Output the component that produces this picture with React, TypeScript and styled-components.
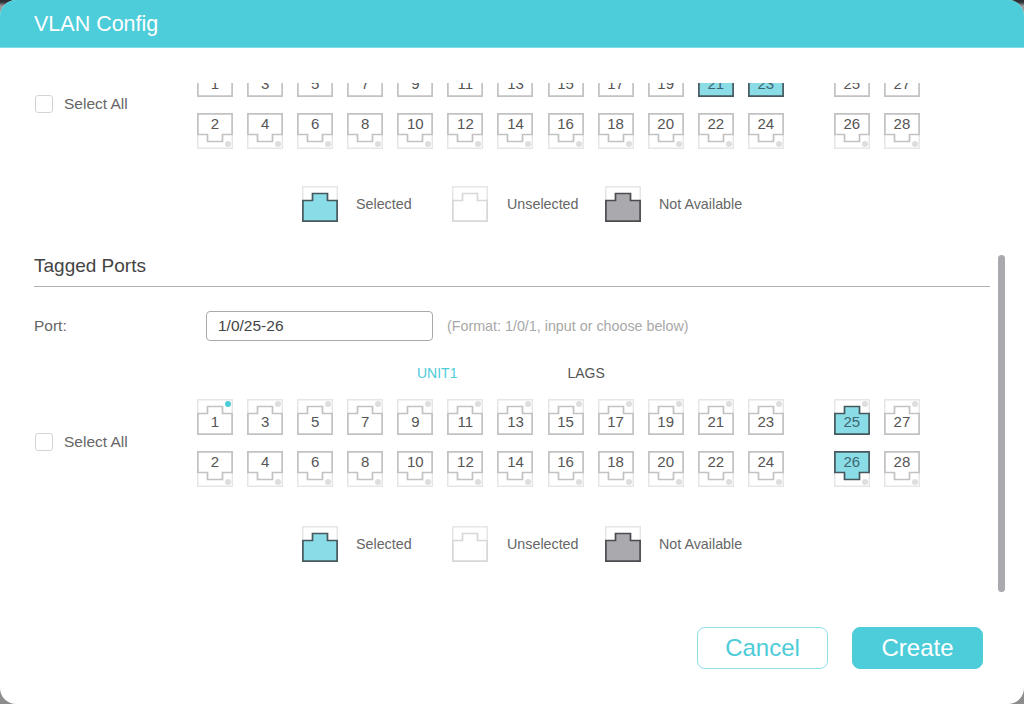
import React from "react";
import styled, { createGlobalStyle } from "styled-components";

const Global = createGlobalStyle`
  html, body { margin: 0; padding: 0; }
  body { background: linear-gradient(#2c3034 0, #2c3034 2px, #9a9a9a 6px, #8c8c8c 100%); }
  * { box-sizing: border-box; }
`;

const Dialog = styled.div`
  position: relative;
  width: 1024px;
  height: 704px;
  display: flex;
  flex-direction: column;
  background: #fff;
  border-radius: 16px;
  overflow: hidden;
  font-family: "Liberation Sans", Arial, sans-serif;
  color: #555;
`;
const Header = styled.header`
  flex: none;
  height: 48px;
  padding: 1px 34px 0;
  display: flex;
  align-items: center;
  background: #4dccd9;
  border-bottom: 1px solid #7fdce5;
  color: #fff;
  font-size: 21.5px;
`;
const Body = styled.div`
  flex: none;
  height: 529px;
  margin-top: 35px;
  overflow: hidden;
`;
const Scrolled = styled.div`
  margin-top: -22.3px;
  padding: 0 34px;
`;
const Panel = styled.div`
  display: flex;
  align-items: center;
`;
const SelectAll = styled.label`
  flex: none;
  width: 163px;
  display: flex;
  align-items: center;
  gap: 11px;
  font-size: 15.5px;
  color: #666;
  margin-top: -2.4px;
`;
const Check = styled.span`
  width: 18px;
  height: 18px;
  margin-left: 1px;
  border: 1.5px solid #d4d4d4;
  border-radius: 3px;
  background: #fff;
`;
const PortGrid = styled.div<{ $cols: number }>`
  display: grid;
  grid-template-columns: repeat(${(p) => p.$cols}, 36px);
  column-gap: 14.09px;
  row-gap: 16px;
`;
const Lags = styled(PortGrid)`
  margin-left: 50px;
`;
const PortBox = styled.div`
  position: relative;
  width: 36px;
  height: 36px;
`;
const PortSvg = styled.svg`
  display: block;
`;
const PortNum = styled.span<{ $odd: boolean; $sel: boolean }>`
  position: absolute;
  left: 0;
  right: 0;
  top: ${(p) => (p.$odd ? "13px" : "1px")};
  height: 20px;
  line-height: 20px;
  text-align: center;
  font-size: 15px;
  color: ${(p) => (p.$sel ? "#3e6670" : "#555")};
`;
const Legend = styled.div<{ $gap: number }>`
  display: flex;
  align-items: center;
  margin: ${(p) => p.$gap}px 0 0 268px;
  height: 36px;
  font-size: 14.3px;
  color: #666;
`;
const LegendItem = styled.div<{ $w: number }>`
  display: flex;
  align-items: center;
  gap: ${(p) => (p.$w === 153 ? 19 : 18)}px;
  width: ${(p) => p.$w}px;
`;
const Section = styled.section`
  margin-top: 31.7px;
`;
const SectionTitle = styled.h2`
  margin: 0;
  height: 33px;
  padding-bottom: 8px;
  border-bottom: 1px solid #b0b0b0;
  font-size: 19px;
  line-height: 24px;
  font-weight: 400;
  color: #444;
`;
const FieldRow = styled.div`
  display: flex;
  align-items: center;
  margin-top: 24px;
  height: 30px;
`;
const FieldLabel = styled.span`
  width: 172px;
  font-size: 15.5px;
  color: #666;
`;
const Input = styled.input`
  width: 227px;
  height: 30px;
  padding: 0 11px;
  border: 1px solid #aaa;
  border-radius: 4px;
  font: inherit;
  font-size: 15.5px;
  color: #444;
  outline: none;
`;
const Hint = styled.span`
  margin-left: 14px;
  font-size: 14.3px;
  color: #a8a8a8;
`;
const Tabs = styled.div`
  display: flex;
  margin: 22px 0 16px 383px;
  height: 20px;
  line-height: 20px;
  font-size: 14px;
  gap: 110px;
`;
const Tab = styled.span<{ $on?: boolean }>`
  color: ${(p) => (p.$on ? "#4dccd9" : "#555")};
`;
const Footer = styled.footer`
  flex: none;
  display: flex;
  justify-content: flex-end;
  gap: 24px;
  padding: 15px 41px 0 0;
`;
const Button = styled.button<{ $primary?: boolean }>`
  width: 131px;
  height: 42px;
  border-radius: 8px;
  border: 1px solid ${(p) => (p.$primary ? "#4dccd9" : "#8fe0e8")};
  background: ${(p) => (p.$primary ? "#4dccd9" : "#fff")};
  color: ${(p) => (p.$primary ? "#fff" : "#4dccd9")};
  font-family: inherit;
  font-size: 24px;
  padding: 0;
`;
const ScrollThumb = styled.div`
  position: absolute;
  left: 998px;
  top: 255px;
  width: 7px;
  height: 337px;
  border-radius: 4px;
  background: #a9a9ae;
`;

type Kind = "selected" | "unselected" | "na";

const fills: Record<Kind, string> = { selected: "#8adde6", unselected: "#fff", na: "#a9a9ae" };
const strokes: Record<Kind, string> = { selected: "#46585e", unselected: "#c2c2c2", na: "#4c4c50" };

function PortShape({ kind, flip, dot, light }: { kind: Kind; flip?: boolean; dot?: string; light?: boolean }) {
  const shape = "M.9 14.5H10.5V7.5H25.5V14.5H35.1V35.1H.9Z";
  return (
    <PortSvg width="36" height="36" viewBox="0 0 36 36">
      <rect x=".75" y=".75" width="34.5" height="34.5" fill="#fff" stroke="#e6e6e6" strokeWidth="1.5" />
      {dot && <circle cx={31} cy={flip ? 31 : 5} r="3" fill={dot} />}
      <path
        d={shape}
        transform={flip ? "matrix(1 0 0 -1 0 36)" : undefined}
        fill={fills[kind]}
        stroke={light ? "#d8d8d8" : strokes[kind]}
        strokeWidth="1.7"
      />
    </PortSvg>
  );
}

function Port({ n, selected, active }: { n: number; selected: boolean; active: boolean }) {
  const odd = n % 2 === 1;
  return (
    <PortBox>
      <PortShape kind={selected ? "selected" : "unselected"} flip={!odd} dot={active ? "#4dccd9" : "#dedede"} />
      <PortNum $odd={odd} $sel={selected}>{n}</PortNum>
    </PortBox>
  );
}

function order(from: number, to: number) {
  const out: number[] = [];
  for (let n = from; n <= to; n += 2) out.push(n);
  for (let n = from + 1; n <= to; n += 2) out.push(n);
  return out;
}

function PortPanel({ selected, activeDot }: { selected: number[]; activeDot?: number }) {
  return (
    <Panel>
      <SelectAll>
        <Check />
        Select All
      </SelectAll>
      <PortGrid $cols={12}>
        {order(1, 24).map((n) => (
          <Port key={n} n={n} selected={selected.includes(n)} active={n === activeDot} />
        ))}
      </PortGrid>
      <Lags $cols={2}>
        {order(25, 28).map((n) => (
          <Port key={n} n={n} selected={selected.includes(n)} active={false} />
        ))}
      </Lags>
    </Panel>
  );
}

function PortLegend({ gap }: { gap: number }) {
  return (
    <Legend $gap={gap}>
      <LegendItem $w={150}>
        <PortShape kind="selected" />
        Selected
      </LegendItem>
      <LegendItem $w={153}>
        <PortShape kind="unselected" light />
        Unselected
      </LegendItem>
      <LegendItem $w={160}>
        <PortShape kind="na" />
        Not Available
      </LegendItem>
    </Legend>
  );
}

export default function App() {
  return (
    <>
      <Global />
      <Dialog>
        <Header>VLAN Config</Header>
        <Body>
          <Scrolled>
            <PortPanel selected={[21, 23]} activeDot={1} />
            <PortLegend gap={37.6} />
            <Section>
              <SectionTitle>Tagged Ports</SectionTitle>
              <FieldRow>
                <FieldLabel>Port:</FieldLabel>
                <Input defaultValue="1/0/25-26" />
                <Hint>(Format: 1/0/1, input or choose below)</Hint>
              </FieldRow>
              <Tabs>
                <Tab $on>UNIT1</Tab>
                <Tab>LAGS</Tab>
              </Tabs>
              <PortPanel selected={[25, 26]} activeDot={1} />
              <PortLegend gap={38.6} />
            </Section>
          </Scrolled>
        </Body>
        <Footer>
          <Button>Cancel</Button>
          <Button $primary>Create</Button>
        </Footer>
        <ScrollThumb />
      </Dialog>
    </>
  );
}
